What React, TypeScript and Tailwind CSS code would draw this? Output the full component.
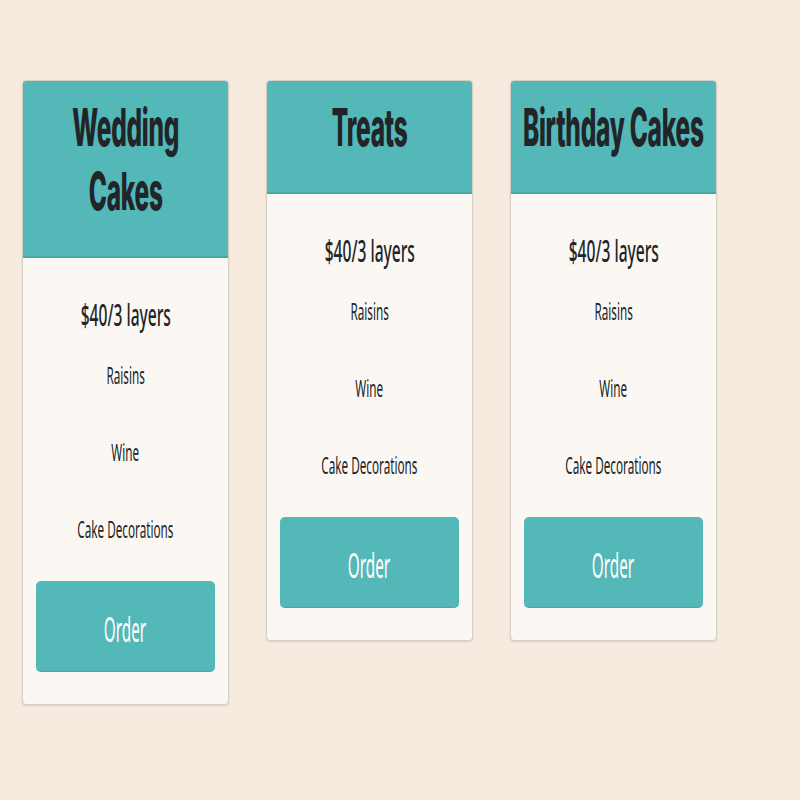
import React from "react";

const items = ["Raisins", "Wine", "Cake Decorations"];

function PriceCard({ title }: { title: string[] }) {
  return (
    <div className="w-[207px] shrink-0 rounded-[4px] border border-[#d6d0c7] bg-[#fbf8f3] shadow-[0_1px_2px_rgba(0,0,0,0.12)] overflow-hidden">
      <div className="bg-[#53b8b7] border-b-2 border-[#45a9a8] pt-[15px] pb-[32px] text-center">
        {title.map((line) => (
          <div key={line} className="flex justify-center h-[64px] leading-[64px]">
            <span className="shrink-0 inline-block scale-x-[0.47] whitespace-nowrap text-[52px] font-extrabold text-[#212529] font-['Inter',sans-serif] tracking-[-0.5px]">
              {line}
            </span>
          </div>
        ))}
      </div>
      <div className="px-[13px] pt-[37px] pb-[32px] text-center text-[#212529] font-['Noto_Sans',sans-serif]">
        <div className="flex justify-center h-[40px] leading-[40px]">
          <span className="shrink-0 inline-block scale-x-[0.52] whitespace-nowrap text-[30px] font-medium">$40/3 layers</span>
        </div>
        {items.map((item, i) => (
          <div key={item} className={`flex justify-center h-[30px] leading-[30px] ${i === 0 ? "mt-[25px]" : "mt-[47px]"}`}>
            <span className="shrink-0 inline-block scale-x-[0.51] whitespace-nowrap text-[23px]">{item}</span>
          </div>
        ))}
        <button
          type="button"
          className="mt-[37px] flex w-full h-[91px] items-center justify-center pt-[6px] rounded-[5px] bg-[#53b8b7] border-b border-[#45a9a8] text-white"
        >
          <span className="shrink-0 inline-block scale-x-[0.45] whitespace-nowrap text-[34px] font-['Noto_Sans',sans-serif]">Order</span>
        </button>
      </div>
    </div>
  );
}

export default function App() {
  return (
    <div className="min-h-[800px] w-full bg-[#f7ebe0] pt-[80px] pl-[22px]">
      <div className="flex items-start gap-[37px]">
        <PriceCard title={["Wedding", "Cakes"]} />
        <PriceCard title={["Treats"]} />
        <PriceCard title={["Birthday Cakes"]} />
      </div>
    </div>
  );
}
